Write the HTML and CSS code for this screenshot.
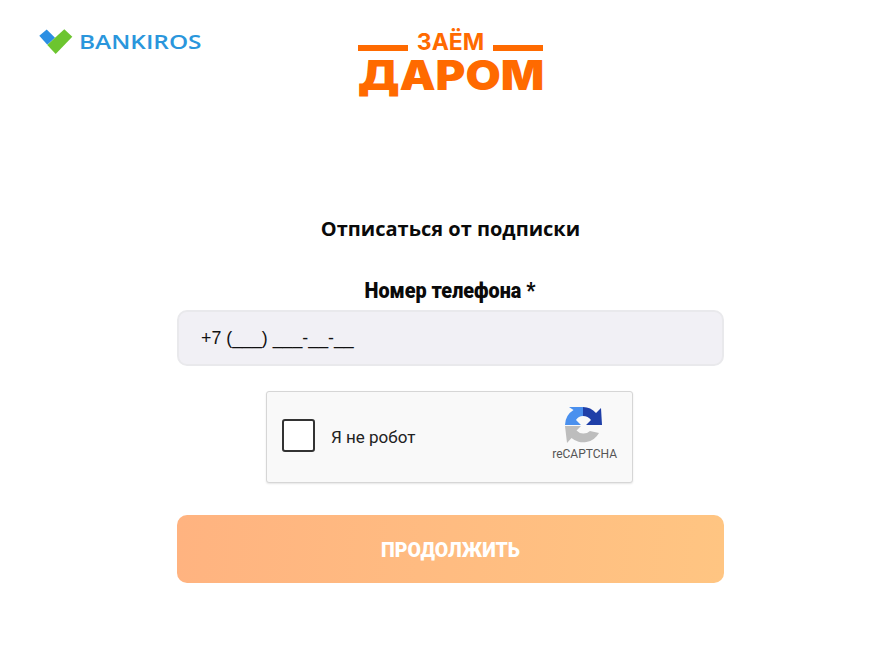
FILE: index.html
```html
<!DOCTYPE html>
<html lang="ru">
<head>
<meta charset="utf-8">
<title>Отписаться от подписки</title>
<link rel="stylesheet" href="styles.css">
</head>
<body>
<div class="page">
  <header class="header">
    <a class="bankiros">
      <svg class="bankiros-mark" viewBox="0 0 34 26" width="34" height="26">
        <path d="M.3 7.7 7.7 1.5 16 9.7 8.3 16.8Z" fill="#2b8fe3"/>
        <path d="M16 9.7 25.3 1.3 33.3 8.7 16.7 26 8.3 17Z" fill="#6cc52f"/>
      </svg>
      <span class="bankiros-text">BANKIROS</span>
    </a>
    <div class="brand">
      <div class="brand-top"><span class="brand-rule"></span><span class="brand-small">ЗАЁМ</span><span class="brand-rule"></span></div>
      <div class="brand-big">ДАРОМ</div>
    </div>
  </header>
  <main class="form">
    <h1 class="title">Отписаться от подписки</h1>
    <label class="label">Номер телефона *</label>
    <div class="phone">+7 (___) ___-__-__</div>
    <div class="captcha">
      <span class="check"></span>
      <span class="captcha-text">Я не робот</span>
      <div class="captcha-logo">
        <svg class="captcha-icon" viewBox="0 0 40 40" width="40" height="40">
          <path d="M19 2V11A9 9 0 0 0 12 15L17 20H1A18 18 0 0 1 9.5 5L5 2Z" fill="#4a90ee"/>
          <path d="M19 2A18 18 0 0 1 32 8L37 3 38 20H22L27 15A10 10 0 0 0 19 11Z" fill="#1f3fa8"/>
          <path d="M1 21H17L12.5 25.5A9.5 9.5 0 0 0 26 26L35 28A18 18 0 0 1 7.5 33L3 38Z" fill="#bdbdbd"/>
        </svg>
        <span class="captcha-brand">reCAPTCHA</span>
      </div>
    </div>
    <button class="submit" type="button">ПРОДОЛЖИТЬ</button>
  </main>
</div>
</body>
</html>
```
FILE: styles.css
```css
* { box-sizing: border-box; }
html, body { margin: 0; padding: 0; background: #fff; overflow: hidden; }
.page { width: 901px; height: 668px; }
.header { position: relative; height: 140px; display: flex; justify-content: center; padding-top: 30px; }
.bankiros { position: absolute; left: 39px; top: 28px; display: flex; align-items: center; gap: 6px; }
.bankiros-mark { display: block; }
.bankiros-text { display: inline-block; font: 600 20.5px/26px "Open Sans", sans-serif; color: #2a96dc; transform: scaleX(1.19); transform-origin: left center; }
.brand { width: 185px; color: #ff6a00; font-family: Inter, "Liberation Sans", sans-serif; }
.brand-top { display: flex; align-items: center; justify-content: space-between; height: 25px; }
.brand-rule { width: 50px; height: 6px; background: #ff6a00; margin-top: 10px; }
.brand-small { font-weight: 700; font-size: 23px; line-height: 25px; }
.brand-big { font-weight: 900; font-size: 41px; line-height: 40px; white-space: nowrap; transform: scaleX(1.11); transform-origin: left center; }
.form { width: 547px; margin: 0 auto; display: flex; flex-direction: column; align-items: center; }
.title { margin: 76px 0 0; font: 700 20px/26px "Open Sans", sans-serif; color: #0a0a0a; }
.label { margin-top: 36px; font: 900 22px/26px Roboto, sans-serif; color: #0a0a0a; transform: scaleX(.9); }
.phone { margin-top: 6px; width: 547px; height: 56px; padding: 0 22px; display: flex; align-items: center; background: #f1f0f5; border: 2px solid #e9e9ec; border-radius: 10px; font: 17.8px "Liberation Sans", sans-serif; color: #111; }
.captcha { margin: 25px 2px 0 0; width: 367px; height: 92px; background: #f9f9f9; border: 1px solid #d6d6d6; border-radius: 3px; box-shadow: 0 1px 2px rgba(0,0,0,.1); display: flex; align-items: center; padding: 0 15px; }
.check { width: 33px; height: 33px; margin-top: -4px; background: #fff; border: 2px solid #333; border-radius: 3px; }
.captcha-text { margin-left: 16px; font: 400 17px Roboto, sans-serif; color: #222; flex: 1; }
.captcha-logo { display: flex; flex-direction: column; align-items: center; margin: -8px 0 0 -2px; }
.captcha-icon { margin-left: -2px; }
.captcha-brand { font: 12px/14px Roboto, sans-serif; color: #555; margin-top: 2px; }
.submit { margin-top: 32px; width: 547px; height: 68px; padding-top: 3px; border: 0; border-radius: 10px; background: linear-gradient(95deg, #ffb380, #ffc582); color: #fff; font: 900 19.5px Roboto, sans-serif; }
```
